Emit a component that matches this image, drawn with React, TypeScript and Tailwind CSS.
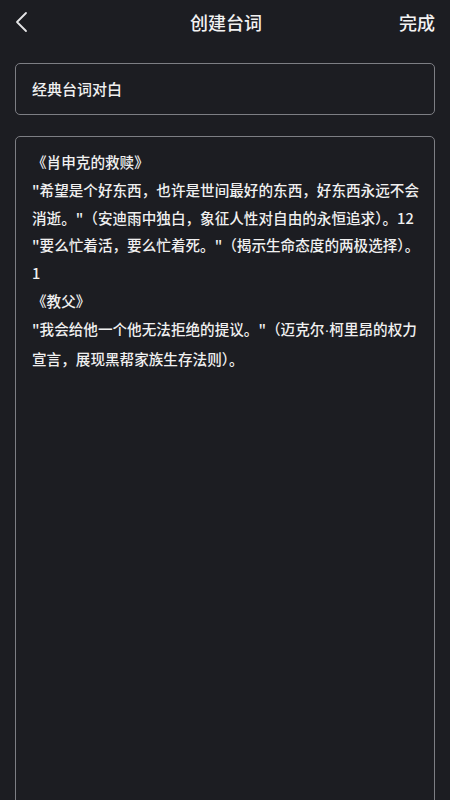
import React from 'react';

const Dot = () => <span style={{ fontFamily: '"Liberation Sans", sans-serif' }}>·</span>;

const lines: React.ReactNode[] = [
  '《肖申克的救赎》',
  '"希望是个好东西，也许是世间最好的东西，好东西永远不会',
  '消逝。"（安迪雨中独白，象征人性对自由的永恒追求）。12',
  '"要么忙着活，要么忙着死。"（揭示生命态度的两极选择）。',
  '1',
  '《教父》',
  <>"我会给他一个他无法拒绝的提议。"（迈克尔<Dot />柯里昂的权力</>,
  '宣言，展现黑帮家族生存法则）。',
];

const App: React.FC = () => {
  return (
    <div
      className="w-[450px] h-[800px] overflow-hidden bg-[#1c1d22] text-white flex flex-col"
      style={{ fontFamily: '"Noto Sans CJK SC", "Noto Sans", sans-serif' }}
    >
      <div className="h-[44px] grid grid-cols-[1fr_auto_1fr] items-center px-[14px] shrink-0">
        <button className="w-[30px] h-[30px] flex items-center">
          <svg width="16" height="22" viewBox="0 0 16 22" fill="none">
            <path d="M12 2 L3 11 L12 20" stroke="#e5e5e7" strokeWidth="1.8" strokeLinecap="round" strokeLinejoin="round" />
          </svg>
        </button>
        <span className="text-[18px] font-medium text-[#f2f2f2] pl-[2px]">创建台词</span>
        <span className="text-[18px] font-medium text-[#f2f2f2] justify-self-end pr-[1px]">完成</span>
      </div>

      <div className="mx-[15px] mt-[19px] h-[52px] border border-[#7d7e84] rounded-[5px] flex items-center px-[16px] shrink-0">
        <span className="text-[15px] font-medium text-[#f0f0f0]">经典台词对白</span>
      </div>

      <div className="mx-[15px] mt-[21px] flex-1 min-h-[700px] border border-[#7d7e84] rounded-[5px] px-[16px] pt-[11px]">
        {lines.map((l, i) => (
          <div key={i} className="text-[14.6px] leading-[27.8px] font-medium text-[#f0f0f0] whitespace-nowrap">
            {l}
          </div>
        ))}
      </div>
    </div>
  );
};

export default App;
